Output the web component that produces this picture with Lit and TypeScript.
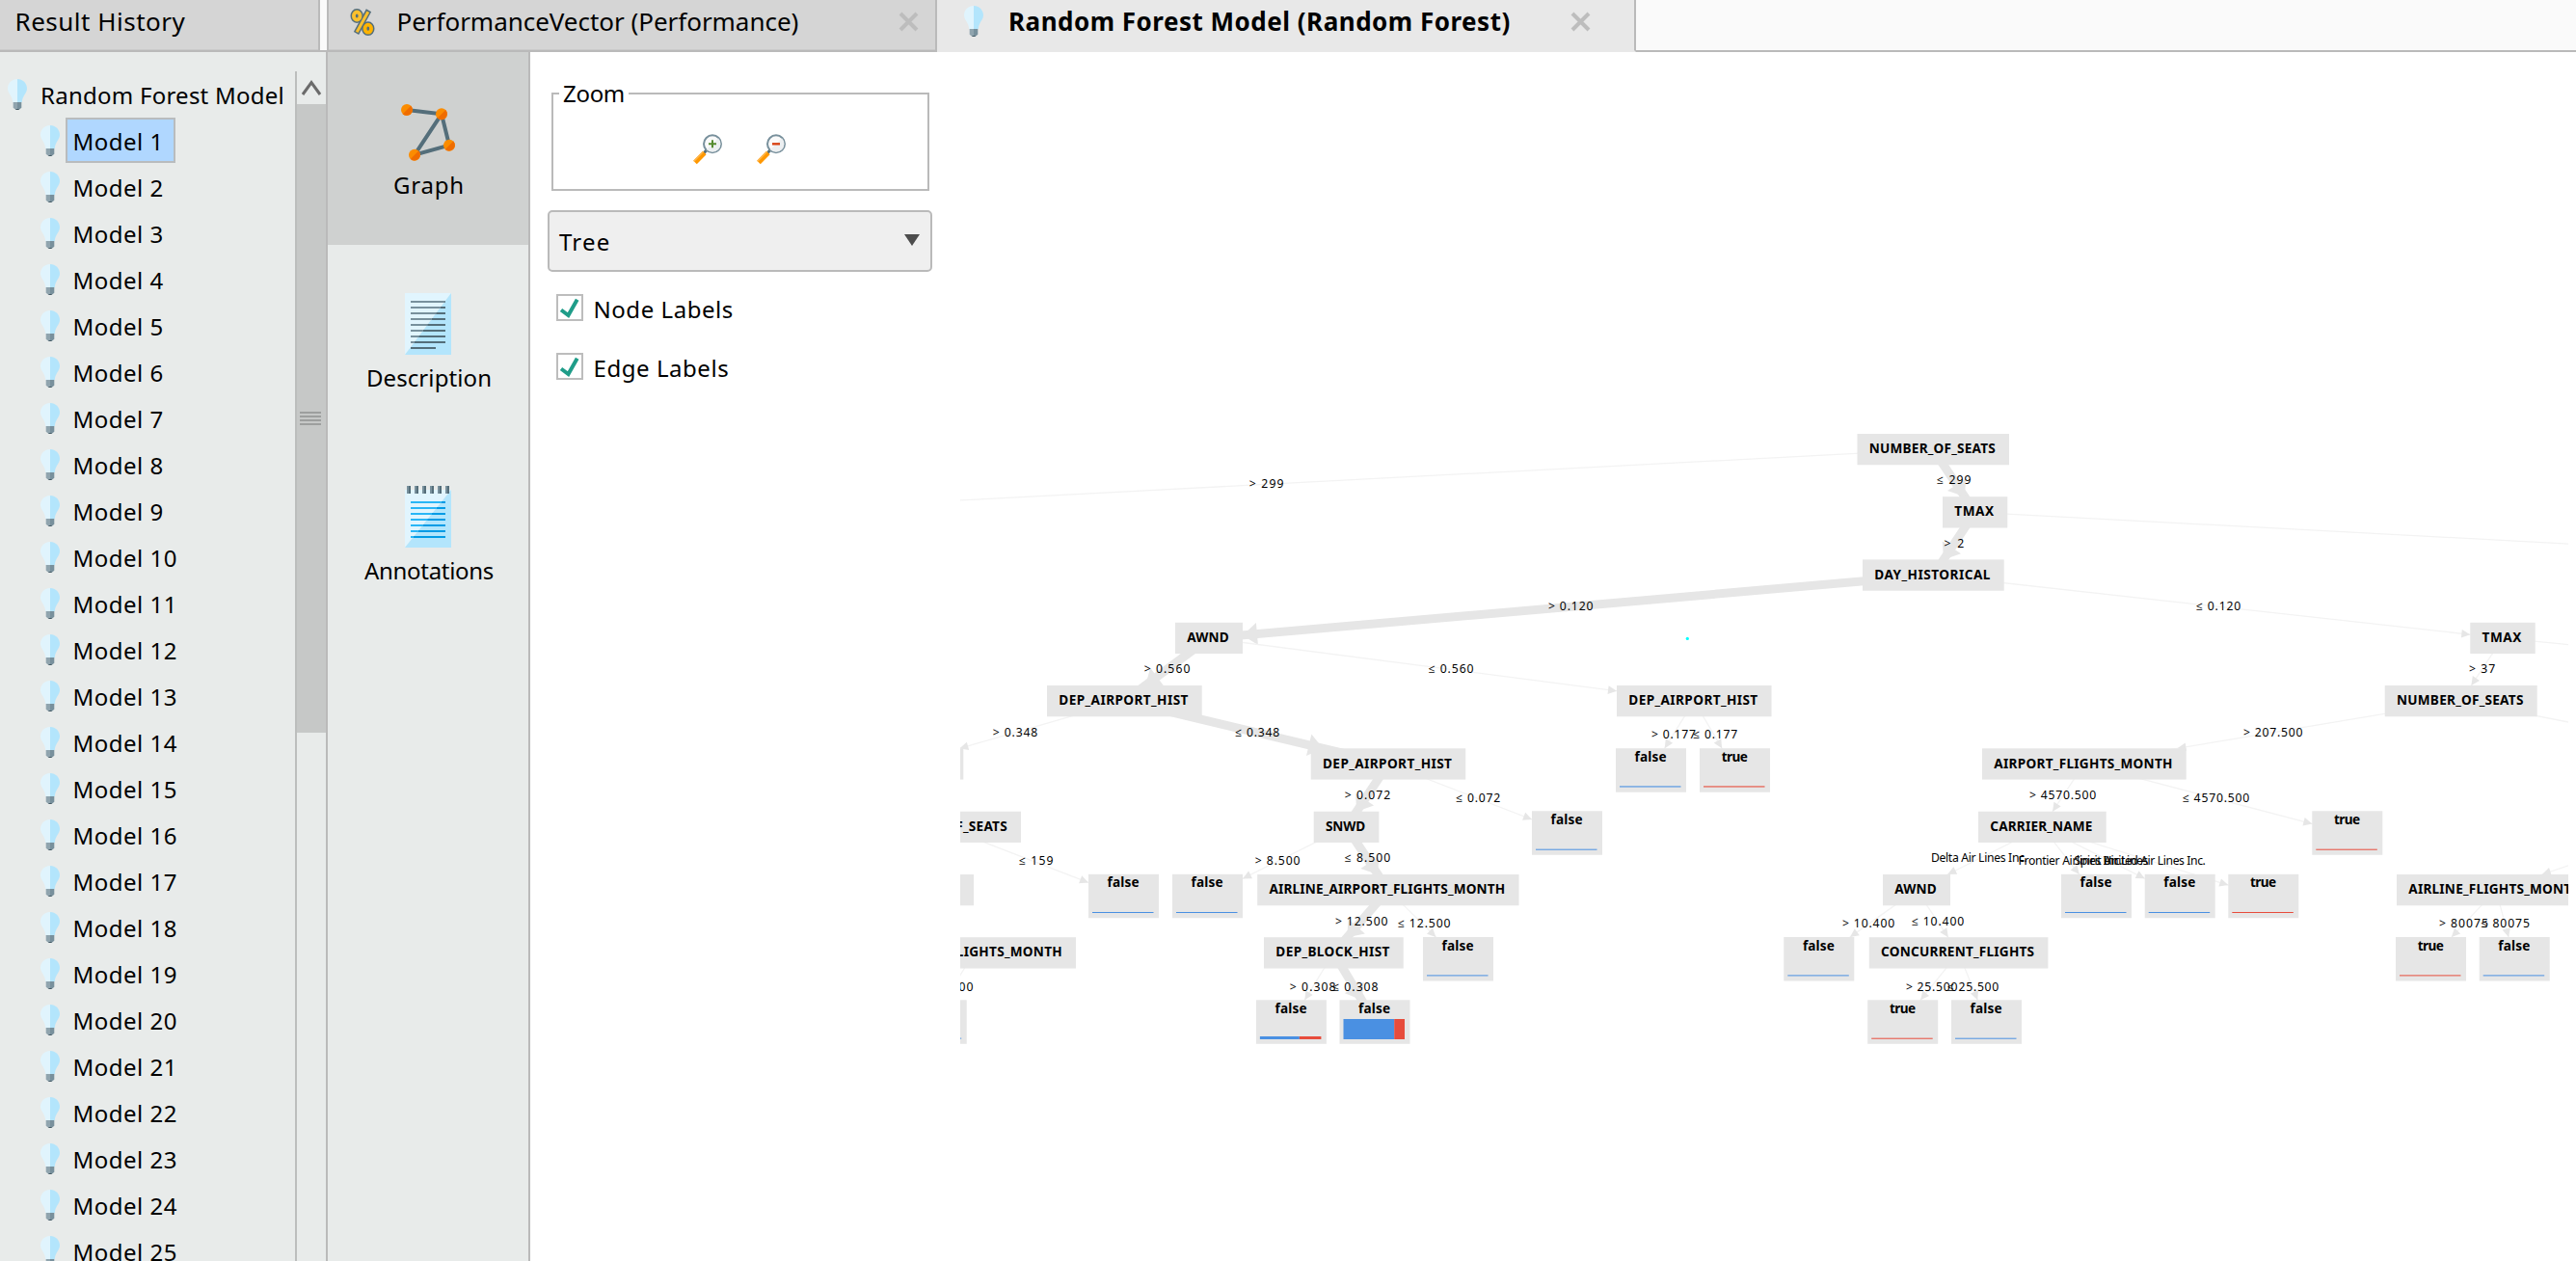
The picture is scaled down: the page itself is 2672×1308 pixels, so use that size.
import { LitElement, html, svg, css } from "lit";
import { customElement, property } from "lit/decorators.js";

type Box = { x: number; y: number; w: number; label: string };
type Leaf = { x: number; y: number; label: string; blue: number; red: number; barY: number; barH: number };
type Edge = { from: [number, number]; to: string | [number, number]; thick?: boolean };
type Label = { x: number; end: number; y: number; text: string };

const NODE_H = 32.3;
const LEAF_W = 73;
const LEAF_H = 45.5;

const boxes: Record<string, Box> = {
  seats: { x: 1926.5, y: 450, w: 157.5, label: "NUMBER_OF_SEATS" },
  tmax: { x: 2015, y: 515.2, w: 67.3, label: "TMAX" },
  day: { x: 1932, y: 580.4, w: 146.7, label: "DAY_HISTORICAL" },
  awnd: { x: 1219, y: 645.8, w: 70, label: "AWND" },
  tmax2: { x: 2562.3, y: 645.8, w: 67.4, label: "TMAX" },
  dep1: { x: 1086, y: 711, w: 160.7, label: "DEP_AIRPORT_HIST" },
  dep3: { x: 1677, y: 711, w: 160.5, label: "DEP_AIRPORT_HIST" },
  seats2: { x: 2473.7, y: 711, w: 158, label: "NUMBER_OF_SEATS" },
  left1: { x: 879, y: 776.3, w: 120.3, label: "" },
  dep2: { x: 1359.7, y: 776.3, w: 160.5, label: "DEP_AIRPORT_HIST" },
  airport: { x: 2056, y: 776.3, w: 211.7, label: "AIRPORT_FLIGHTS_MONTH" },
  seats3: { x: 901, y: 841.7, w: 158, label: "NUMBER_OF_SEATS" },
  snwd: { x: 1362.7, y: 841.7, w: 67.7, label: "SNWD" },
  carrier: { x: 2052, y: 841.7, w: 132.7, label: "CARRIER_NAME" },
  left2: { x: 930, y: 907, w: 80, label: "" },
  airline: { x: 1304.2, y: 907, w: 271.3, label: "AIRLINE_AIRPORT_FLIGHTS_MONTH" },
  awnd2: { x: 1953, y: 907, w: 70, label: "AWND" },
  airline2: { x: 2486, y: 907, w: 206, label: "AIRLINE_FLIGHTS_MONTH" },
  airport2: { x: 904.5, y: 972.2, w: 211.5, label: "AIRPORT_FLIGHTS_MONTH" },
  block: { x: 1311, y: 972.2, w: 144.7, label: "DEP_BLOCK_HIST" },
  conc: { x: 1938.8, y: 972.2, w: 185.6, label: "CONCURRENT_FLIGHTS" },
};

const leaf = (x: number, y: number, label: string, blue: number, barY: number, barH = 1): Leaf => ({
  x, y, label, blue, red: 1 - blue, barY, barH,
});

const leaves: Record<string, Leaf> = {
  f1: leaf(1676, 776.2, "false", 1, 815.4, 1.1),
  t1: leaf(1763, 776.2, "true", 0, 815.4, 1.1),
  f2: leaf(1589, 841.3, "false", 1, 880.7),
  t2: leaf(2398.3, 841.3, "true", 0, 880.7),
  f3: leaf(1129, 906.8, "false", 1, 946),
  f4: leaf(1216, 906.8, "false", 1, 946),
  f5: leaf(2138, 906.8, "false", 1, 946),
  f6: leaf(2224.7, 906.8, "false", 1, 946),
  t3: leaf(2311.3, 906.8, "true", 0, 946),
  f7: leaf(1476, 972, "false", 1, 1011.4),
  f8: leaf(1850.3, 972, "false", 1, 1011.4),
  t4: leaf(2485, 972, "true", 0, 1011.4),
  f9: leaf(2571.7, 972, "false", 1, 1011.4),
  l1: leaf(929.7, 1037.3, "", 1, 1076.6),
  f10: leaf(1302.9, 1037.3, "false", 0.645, 1075, 3),
  f11: leaf(1389.5, 1037.3, "false", 0.83, 1057, 21),
  t5: leaf(1937.2, 1037.3, "true", 0, 1076.7),
  f12: leaf(2024, 1037.3, "false", 1, 1076.7),
};

const center = (id: string): [number, number] => {
  const b = boxes[id];
  if (b) return [b.x + b.w / 2, b.y + NODE_H / 2];
  const l = leaves[id];
  return [l.x + LEAF_W / 2, l.y + LEAF_H / 2];
};
const e = (from: string, to: string | [number, number], thick = false): Edge => ({ from: center(from), to, thick });

const edges: Edge[] = [
  e("seats", [880, 525]),
  e("seats", "tmax", true),
  e("tmax", [2720, 567]),
  e("tmax", "day", true),
  e("day", "awnd", true),
  e("day", "tmax2"),
  e("awnd", "dep1", true),
  e("awnd", "dep3"),
  e("tmax2", "seats2"),
  e("tmax2", [2720, 674]),
  e("dep1", "left1"),
  e("dep1", "dep2", true),
  e("dep3", "f1"),
  e("dep3", "t1"),
  e("seats2", "airport"),
  e("seats2", [2720, 760]),
  e("dep2", "snwd", true),
  e("dep2", "f2"),
  e("airport", "carrier"),
  e("airport", "t2"),
  e("seats3", "f3"),
  e("snwd", "f4"),
  e("snwd", "airline", true),
  e("carrier", "awnd2"),
  e("carrier", "f5"),
  e("carrier", "f6"),
  e("carrier", "t3"),
  { from: [2800, 852], to: "airline2" },
  e("airline", "block", true),
  e("airline", "f7"),
  e("awnd2", "f8"),
  e("awnd2", "conc"),
  e("airline2", "t4"),
  e("airline2", "f9"),
  e("airport2", "l1"),
  e("block", "f10"),
  e("block", "f11", true),
  e("conc", "t5"),
  e("conc", "f12"),
];

const labels: Label[] = [
  { x: 1296.5, end: 1331, y: 505.5, text: "> 299" },
  { x: 2009.8, end: 2044, y: 502.3, text: "≤ 299" },
  { x: 2017.2, end: 2036.6, y: 568.3, text: "> 2" },
  { x: 1606.7, end: 1652, y: 633, text: "> 0.120" },
  { x: 2278.7, end: 2323.7, y: 633, text: "≤ 0.120" },
  { x: 1187.5, end: 1233.8, y: 698.2, text: "> 0.560" },
  { x: 1482.5, end: 1528, y: 698.2, text: "≤ 0.560" },
  { x: 2561.7, end: 2587.7, y: 698.2, text: "> 37" },
  { x: 1030.6, end: 1075.7, y: 764.2, text: "> 0.348" },
  { x: 1282, end: 1326.7, y: 764.2, text: "≤ 0.348" },
  { x: 1713.7, end: 1758.5, y: 766.2, text: "> 0.177" },
  { x: 1757, end: 1801.7, y: 766.2, text: "≤ 0.177" },
  { x: 2327.7, end: 2388, y: 764.2, text: "> 207.500" },
  { x: 1395.6, end: 1441.6, y: 829.4, text: "> 0.072" },
  { x: 1511, end: 1555.6, y: 832.2, text: "≤ 0.072" },
  { x: 2105.7, end: 2173.7, y: 829.4, text: "> 4570.500" },
  { x: 2264.7, end: 2332.7, y: 832.2, text: "≤ 4570.500" },
  { x: 1057.7, end: 1092, y: 897.2, text: "≤ 159" },
  { x: 1302.6, end: 1348, y: 897.2, text: "> 8.500" },
  { x: 1395.6, end: 1441.6, y: 894.2, text: "≤ 8.500" },
  { x: 2003.7, end: 2102.3, y: 894.2, text: "Delta Air Lines Inc." },
  { x: 2094.3, end: 2201, y: 897.2, text: "Frontier Airlines Inc." },
  { x: 2152.3, end: 2227.7, y: 897.2, text: "Spirit Air Lines" },
  { x: 2182.3, end: 2287.3, y: 897.2, text: "United Air Lines Inc." },
  { x: 1385.7, end: 1438.9, y: 960.4, text: "> 12.500" },
  { x: 1450.7, end: 1504, y: 962.2, text: "≤ 12.500" },
  { x: 1911.7, end: 1964.7, y: 962.2, text: "> 10.400" },
  { x: 1983.7, end: 2036.7, y: 960.4, text: "≤ 10.400" },
  { x: 2530.7, end: 2580.3, y: 962.2, text: "> 80075" },
  { x: 2574.3, end: 2623.3, y: 962.2, text: "≤ 80075" },
  { x: 955.5, end: 1008.8, y: 1028.3, text: "> 32.500" },
  { x: 1338.6, end: 1385, y: 1028.3, text: "> 0.308" },
  { x: 1383, end: 1429, y: 1028.3, text: "≤ 0.308" },
  { x: 1977.7, end: 2030, y: 1028.3, text: "> 25.500" },
  { x: 2020.7, end: 2072.7, y: 1028.3, text: "≤ 25.500" },
];

@customElement("tree-graph")
export class TreeGraph extends LitElement {
  static styles = css`
    :host { display: block; }
    svg { display: block; width: 1668px; height: 1254px; }
    .thin { stroke: #f3f3f3; stroke-width: 1.3; }
    .thick { stroke: #e6e6e6; stroke-width: 9; }
    .head, .node { fill: #e6e6e6; }
    text { font-family: "Noto Sans", "Open Sans", sans-serif; fill: #000; }
    .name { font-size: 13.600px; font-weight: 700; }
    .cond { font-size: 12.200px; }
    .blue { fill: #4a90e2; }
    .red { fill: #e74c3c; }
    .dot { fill: #00ffff; }
  `;

  private line(d: Edge) {
    const [sx, sy] = d.from;
    const [tx, ty] = typeof d.to === "string" ? center(d.to) : d.to;
    return svg`<line class=${d.thick ? "thick" : "thin"} x1=${sx} y1=${sy} x2=${tx} y2=${ty}></line>${this.head(d)}`;
  }

  /* Arrow head whose tip touches the border of the target box. */
  private head(d: Edge) {
    if (typeof d.to !== "string") return null;
    const [sx, sy] = d.from;
    const [tx, ty] = center(d.to);
    const b = boxes[d.to];
    const hw = (b ? b.w : LEAF_W) / 2;
    const hh = (b ? NODE_H : LEAF_H) / 2;
    const dx = sx - tx;
    const dy = sy - ty;
    const k = Math.min(hw / Math.abs(dx || 1e-6), hh / Math.abs(dy || 1e-6));
    const px = tx + dx * k;
    const py = ty + dy * k;
    const len = Math.hypot(dx, dy);
    const ux = dx / len;
    const uy = dy / len;
    const l = d.thick ? 15 : 9;
    const w = d.thick ? 11.5 : 4.3;
    const pts = [
      [px, py],
      [px + ux * l - uy * w, py + uy * l + ux * w],
      [px + ux * l + uy * w, py + uy * l - ux * w],
    ];
    return svg`<polygon class="head" points=${pts.map((p) => p.map((v) => v.toFixed(1)).join(",")).join(" ")}></polygon>`;
  }

  render() {
    return html`<svg viewBox="996 54 1668 1254">
      ${edges.map((d) => this.line(d))}
      ${Object.values(boxes).map(
        (b) => svg`<rect class="node" x=${b.x} y=${b.y} width=${b.w} height=${NODE_H}></rect>
          ${b.label ? svg`<text class="name" x=${b.x + 12.3} y=${b.y + 20.2} textLength=${b.w - 26.6}>${b.label}</text>` : null}`,
      )}
      ${Object.values(leaves).map(
        (l) => svg`<rect class="node" x=${l.x} y=${l.y} width=${LEAF_W} height=${LEAF_H}></rect>
          ${l.label ? svg`<text class="name" x=${l.x + (l.label === "true" ? 22.8 : 19.6)} y=${l.y + 13.5} textLength=${l.label === "true" ? 27 : 33}>${l.label}</text>` : null}
          <rect class="blue" x=${l.x + 4} y=${l.barY} width=${63.5 * l.blue} height=${l.barH}></rect>
          <rect class="red" x=${l.x + 4 + 63.5 * l.blue} y=${l.barY} width=${63.5 * l.red} height=${l.barH}></rect>`,
      )}
      ${labels.map((t) => svg`<text class="cond" x=${t.x - 0.8} y=${t.y} textLength=${t.end - t.x + 1.4}>${t.text}</text>`)}
      <circle class="dot" cx="1750.3" cy="662.4" r="1.6"></circle>
    </svg>`;
  }
}

@customElement("ui-icon")
export class UiIcon extends LitElement {
  static styles = css`
    :host { display: block; flex: none; }
    svg { display: block; overflow: visible; }
  `;
  @property() name = "";

  render() {
    switch (this.name) {
      case "bulb":
        return html`<svg width="20" height="32" viewBox="0 0 20 32">
          <path fill="#e0f4fd" d="M10 0C4.400 0 0 4.300 0 9.800c0 5 5 7.700 5.200 14.200H10z"></path>
          <path fill="#b3e5fc" d="M10 0c5.600 0 10 4.300 10 9.800 0 5-5 7.700-5.200 14.200H10z"></path>
          <path fill="#90a4ae" d="M5.700 24H10v8H8.500L5.700 29.700z"></path>
          <path fill="#78909c" d="M10 24h4.300v5.700L11.500 32H10z"></path>
          <path fill="#455a64" d="M8 31h4l-1 1H9z"></path>
        </svg>`;
      case "percent":
        return html`<svg width="24" height="28" viewBox="0 0 24 28" fill="none">
          <g stroke="#546e7a" stroke-width="6.800"><ellipse cx="6.200" cy="7.500" rx="3.300" ry="4"></ellipse><ellipse cx="17.800" cy="20.700" rx="3.300" ry="4"></ellipse><path d="M18.500 1.800 5.500 25.500" stroke-width="6"></path></g>
          <g stroke="#fbc02d" stroke-width="3.800"><path d="M17.800 3.200 6.200 24.200" stroke-width="3"></path><ellipse cx="6.200" cy="7.500" rx="3.300" ry="4"></ellipse><ellipse cx="17.800" cy="20.700" rx="3.300" ry="4" stroke="#ffb300"></ellipse></g>
        </svg>`;
      case "close":
        return html`<svg width="21" height="21" viewBox="0 0 21 21"><path d="M2 2l17 17M19 2L2 19" stroke="#bdbdbd" stroke-width="4" fill="none"></path></svg>`;
      case "graph":
        return html`<svg width="60" height="64" viewBox="0 0 60 64">
          <path d="M8 8l36 4.300 8 32.400-36 10L44 12.300" fill="none" stroke="#546e7a" stroke-width="4"></path>
          ${[[8, 8], [44, 12.3], [52, 44.7], [16, 54.7]].map(
            ([x, y]) => svg`<circle cx=${x} cy=${y} r="6" fill="#fb8c00"></circle><path fill="#ef6c00" d="M${x + 4.24} ${y - 4.24}A6 6 0 0 1 ${x - 4.24} ${y + 4.24}z"></path>`,
          )}
        </svg>`;
      case "description":
        return html`<svg width="48" height="64" viewBox="0 0 48 64">
          <path fill="#e1f5fe" d="M0 0h48L0 64z"></path><path fill="#b3e5fc" d="M48 0v64H0z"></path>
          ${[0, 1, 2, 3, 4, 5, 6, 7, 8].map((i) => {
            const y = 8 + i * 6;
            const end = i === 8 ? 32 : 42;
            const mid = Math.max(6, Math.min(end, 48 - (y + 1) * 0.75));
            return svg`<rect x="6" y=${y} width=${mid - 6} height="2" fill="#78909c"></rect><rect x=${mid} y=${y} width=${end - mid} height="2" fill="#546e7a"></rect>`;
          })}
        </svg>`;
      case "annotations":
        return html`<svg width="48" height="64" viewBox="0 0 48 64">
          <path fill="#e1f5fe" d="M0 4h48L0 64z"></path><path fill="#b3e5fc" d="M48 4v60H0z"></path>
          ${[0, 1, 2, 3, 4, 5].map((i) => svg`<rect x=${2 + i * 8} y="0" width="2" height="8" fill="#78909c"></rect><rect x=${4 + i * 8} y="0" width="2" height="8" fill="#546e7a"></rect>`)}
          ${[0, 1, 2, 3, 4, 5, 6].map((i) => {
            const y = 16 + i * 6;
            const mid = Math.max(6, Math.min(42, 48 - (y - 3) * 0.8));
            return svg`<rect x="6" y=${y} width=${mid - 6} height="2" fill="#29b6f6"></rect><rect x=${mid} y=${y} width=${42 - mid} height="2" fill="#039be5"></rect>`;
          })}
        </svg>`;
      case "zoom-in":
      case "zoom-out":
        return html`<svg width="30" height="31" viewBox="0 0 30 31">
          <path d="M14 16.500l-3.500 4" stroke="#546e7a" stroke-width="3"></path>
          <path d="M11.800 19.500L2 29.500" stroke="#ff9800" stroke-width="5"></path>
          <path d="M10.500 18.300L.8 28.200" stroke="#ffb74d" stroke-width="1.600"></path>
          <circle cx="20" cy="10.300" r="9" fill="#fafafa" stroke="#78909c" stroke-width="2"></circle>
          <path d="M26 4.300a8.200 8.200 0 0 1-12 12z" fill="#eceff1"></path>
          ${this.name === "zoom-in"
            ? svg`<path d="M16 10.300h8M20 6.300v8" stroke="#558b2f" stroke-width="2"></path>`
            : svg`<path d="M16 10.300h8" stroke="#d84315" stroke-width="2.400"></path>`}
        </svg>`;
      case "check":
        return html`<svg width="28" height="28" viewBox="0 0 28 28">
          <rect x="1" y="1" width="26" height="26" fill="#fff" stroke="#bdbdbd" stroke-width="2"></rect>
          <path d="M5 16.500l7.500 5.500L21.700 5.800" fill="none" stroke="#1f9d89" stroke-width="4"></path>
        </svg>`;
      case "up":
        return html`<svg width="20" height="16" viewBox="0 0 20 16"><path d="M1 15L10 2.500 19 15" fill="none" stroke="#6b6b6b" stroke-width="3"></path></svg>`;
      case "down":
        return html`<svg width="16" height="12" viewBox="0 0 16 12"><path d="M0 0h16L8 12z" fill="#4d4d4d"></path></svg>`;
    }
    return null;
  }
}

@customElement("app-root")
export class AppRoot extends LitElement {
  static styles = css`
    :host { display: block; font-family: "Noto Sans", "Open Sans", sans-serif; font-size: 24px; color: #000; }
    .page { display: flex; flex-direction: column; width: 2672px; height: 1308px; overflow: hidden; background: #fff; }
    .header { display: flex; height: 54px; flex: none; background: #fafafa; font-size: 26px; line-height: 44.5px; white-space: nowrap; }
    .tab { display: flex; box-sizing: border-box; height: 54px; background: #d5d5d5; border-bottom: 2px solid #bababa; box-shadow: inset 0 -1px #cacaca; border-right: 2px solid #bababa; }
    .history { width: 332px; padding-left: 15.500px; letter-spacing: 0.5px; }
    .gap { width: 7px; box-sizing: border-box; border-bottom: 2px solid #bababa; }
    .perf { width: 633px; padding-left: 23px; border-left: 2px solid #bababa; }
    .perf .tab-text { width: 520px; margin-left: 23.500px; letter-spacing: -0.03px; }
    .perf ui-icon { margin-top: 9px; }
    .active { width: 725px; padding-left: 28px; background: #e8e8e8; border-bottom-color: #e8e8e8; box-shadow: none; font-weight: 700; letter-spacing: 0.5px; }
    .active .tab-text { width: 583px; margin-left: 26px; }
    .active ui-icon { margin-top: 6px; }
    .tab ui-icon.close { margin-top: 12px; }
    .rest { flex: 1; box-sizing: border-box; border-bottom: 2px solid #bababa; }
    .body { display: flex; flex: 1; min-height: 0; }
    .side { display: flex; width: 338px; background: #e8ebea; border-right: 2px solid #bababa; padding-top: 20px; overflow: hidden; }
    .tree { width: 306px; white-space: nowrap; line-height: 49.500px; }
    .row { display: flex; height: 48px; padding-left: 42px; letter-spacing: 0.5px; }
    .row ui-icon { margin-top: 8px; }
    .row.root { padding-left: 8px; letter-spacing: 0.25px; }
    .row.root .item { padding-left: 12px; }
    .item { box-sizing: border-box; height: 47px; margin-left: 5.500px; padding: 0 10px 0 8px; }
    .row.root .item { margin-left: 2px; }
    .item.selected { background: #b0d7ff; border: 2px solid #b9bcbe; line-height: 45.500px; padding: 0 10px 0 6px; }
    .scroll { width: 30px; border-left: 2px solid #bcbebd; }
    .scroll-up { display: flex; justify-content: center; height: 34px; }
    .scroll-up ui-icon { margin-top: 9px; }
    .thumb { display: flex; flex-direction: column; gap: 2px; align-items: center; justify-content: center; height: 652px; background: #c6c8c7; }
    .grip { width: 22px; height: 2px; background: #9d9f9e; margin-right: 2px; }
    .views { width: 208px; background: #e8ebea; border-right: 2px solid #bababa; }
    .view { display: flex; flex-direction: column; align-items: center; height: 200px; line-height: 32px; }
    .view.on { background: #cfd1d0; }
    .view ui-icon { margin: 50px 0 7.500px; }
    .view.on ui-icon { margin: 52px 0 5.500px; }
    .view span { padding-left: 2px; }
    .graph-t { letter-spacing: 0.8px; }
    .desc-t { letter-spacing: 0.1px; }
    .anno-t { letter-spacing: -0.3px; }
    .controls { width: 446px; box-sizing: border-box; padding: 42px 29px 0 18px; }
    .zoom { display: flex; justify-content: center; box-sizing: border-box; position: relative; width: 391.500px; height: 102px; margin-left: 4px; border: 2px solid #bababa; padding: 41px 1.500px 0 0; gap: 36px; }
    .legend { position: absolute; left: 6px; top: -17px; height: 32px; line-height: 32px; padding: 0 4px; background: #fff; letter-spacing: -0.3px; }
    .combo { display: flex; align-items: center; justify-content: space-between; box-sizing: border-box; width: 399px; height: 64px; margin-top: 20px; padding: 0 11px 0 10px; background: #efefef; border: 2px solid #bababa; border-radius: 5px; letter-spacing: 1.2px; }
    .checkbox { display: flex; height: 28px; line-height: 32px; margin: 23px 0 0 9px; gap: 10.500px; letter-spacing: 0.55px; white-space: nowrap; }
    .checkbox + .checkbox { margin-top: 32.500px; }
    .combo ui-icon { margin-bottom: 2px; }
  `;

  render() {
    return html`<div class="page">
      <div class="header">
        <div class="tab history">Result History</div>
        <div class="gap"></div>
        <div class="tab perf">
          <ui-icon name="percent"></ui-icon>
          <span class="tab-text">PerformanceVector (Performance)</span>
          <ui-icon class="close" name="close"></ui-icon>
        </div>
        <div class="tab active">
          <ui-icon name="bulb"></ui-icon>
          <span class="tab-text">Random Forest Model (Random Forest)</span>
          <ui-icon class="close" name="close"></ui-icon>
        </div>
        <div class="rest"></div>
      </div>
      <div class="body">
        <div class="side">
          <div class="tree">
            <div class="row root"><ui-icon name="bulb"></ui-icon><span class="item">Random Forest Model</span></div>
            ${Array.from({ length: 25 }, (_, i) => html`<div class="row">
              <ui-icon name="bulb"></ui-icon><span class="item ${i === 0 ? "selected" : ""}">Model ${i + 1}</span>
            </div>`)}
          </div>
          <div class="scroll">
            <div class="scroll-up"><ui-icon name="up"></ui-icon></div>
            <div class="thumb">${[0, 1, 2, 3].map(() => html`<div class="grip"></div>`)}</div>
          </div>
        </div>
        <div class="views">
          <div class="view on"><ui-icon name="graph"></ui-icon><span class="graph-t">Graph</span></div>
          <div class="view"><ui-icon name="description"></ui-icon><span class="desc-t">Description</span></div>
          <div class="view"><ui-icon name="annotations"></ui-icon><span class="anno-t">Annotations</span></div>
        </div>
        <div class="controls">
          <div class="zoom">
            <span class="legend">Zoom</span>
            <ui-icon name="zoom-in"></ui-icon>
            <ui-icon name="zoom-out"></ui-icon>
          </div>
          <div class="combo"><span>Tree</span><ui-icon name="down"></ui-icon></div>
          <div class="checkbox"><ui-icon name="check"></ui-icon><span>Node Labels</span></div>
          <div class="checkbox"><ui-icon name="check"></ui-icon><span>Edge Labels</span></div>
        </div>
        <tree-graph></tree-graph>
      </div>
    </div>`;
  }
}
